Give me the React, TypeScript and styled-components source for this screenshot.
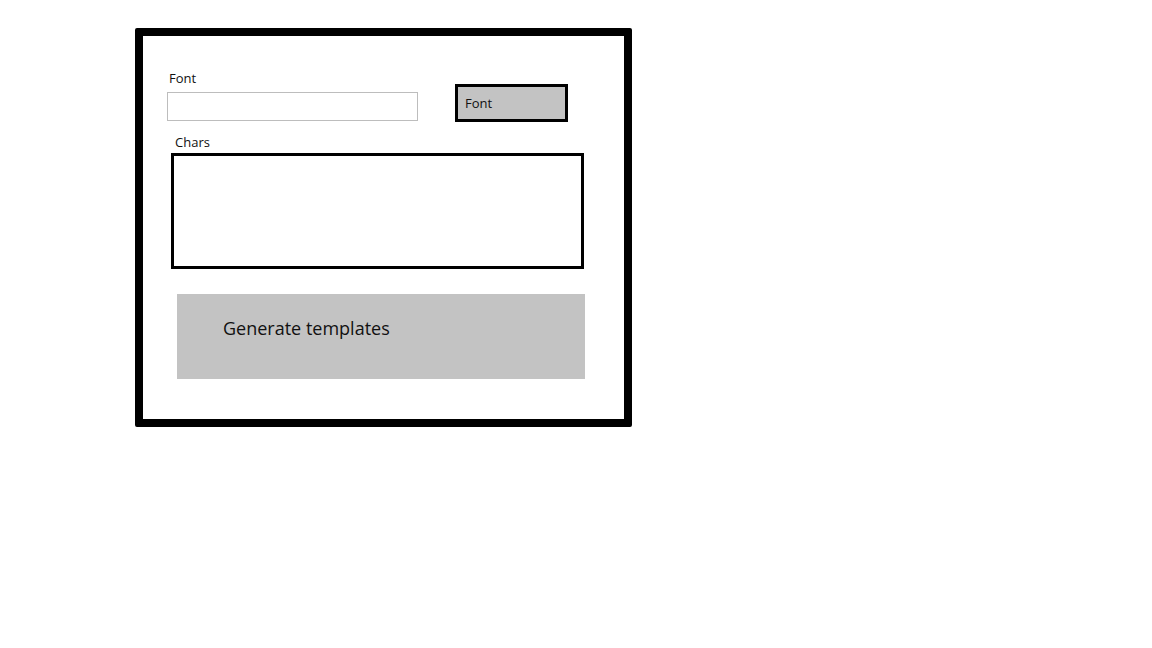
import { FC } from "react";
import styled, { createGlobalStyle } from "styled-components";

const GlobalStyle = createGlobalStyle`
  html, body {
    margin: 0;
    padding: 0;
    background: #ffffff;
  }
  body {
    font-family: "Open Sans", "Noto Sans", "Liberation Sans", sans-serif;
    color: #111;
  }
`

const App: FC = () => {
  return (
    <>
      <GlobalStyle />
      <Page>
        <Frame>
          <TopRow>
            <Field>
              <Label indent={2}>Font</Label>
              <TextInput type="text" />
            </Field>
            <FontButton>Font</FontButton>
          </TopRow>
          <Label indent={32} top={13}>Chars</Label>
          <CharsBox />
          <GenerateButton>Generate templates</GenerateButton>
        </Frame>
      </Page>
    </>
  )
}

export default App

const Page = styled.div`
  padding: 28px 0 0 135px;
`

const Frame = styled.div`
  box-sizing: border-box;
  width: 497px;
  height: 399px;
  border: 8px solid #000;
  border-radius: 2px;
  padding-top: 34px;
  display: flex;
  flex-direction: column;
  align-items: flex-start;
`

const TopRow = styled.div`
  display: flex;
  align-items: flex-end;
  padding-left: 24px;
`

const Field = styled.div`
  display: flex;
  flex-direction: column;
  gap: 6px;
`

const Label = styled.div<{ indent: number; top?: number }>`
  margin-left: ${(p) => p.indent}px;
  margin-top: ${(p) => p.top ?? 0}px;
  font-size: 13px;
  line-height: 16px;
`

const TextInput = styled.input`
  box-sizing: border-box;
  width: 251px;
  height: 29px;
  margin: 0;
  border: 1px solid #bdbdbd;
  outline: none;
  background: #fff;
`

const FontButton = styled.div`
  box-sizing: border-box;
  width: 113px;
  height: 38px;
  margin-left: 37px;
  margin-bottom: -1px;
  padding-left: 7px;
  display: flex;
  align-items: center;
  border: 3px solid #000;
  background: #c3c3c3;
  font-size: 13px;
`

const CharsBox = styled.div`
  box-sizing: border-box;
  width: 413px;
  height: 116px;
  margin: 3px 0 0 28px;
  border: 3px solid #000;
  background: #fff;
`

const GenerateButton = styled.div`
  box-sizing: border-box;
  width: 408px;
  height: 85px;
  margin: 25px 0 0 34px;
  padding: 22px 0 0 46px;
  background: #c3c3c3;
  font-size: 18px;
  line-height: 24px;
`
